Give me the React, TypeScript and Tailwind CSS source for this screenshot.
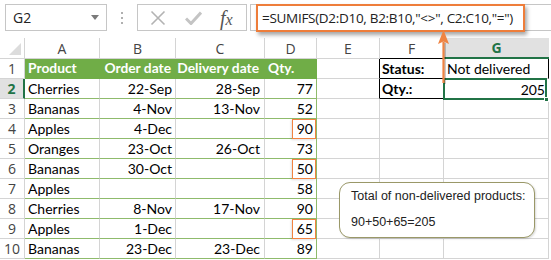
import React from 'react';

type Row = { n: number; a: string; b: string; c: string; d: string; mark?: boolean };

const rows: Row[] = [
  { n: 2, a: 'Cherries', b: '22-Sep', c: '28-Sep', d: '77' },
  { n: 3, a: 'Bananas', b: '4-Nov', c: '13-Nov', d: '52' },
  { n: 4, a: 'Apples', b: '4-Dec', c: '', d: '90', mark: true },
  { n: 5, a: 'Oranges', b: '23-Oct', c: '26-Oct', d: '73' },
  { n: 6, a: 'Bananas', b: '30-Oct', c: '', d: '50', mark: true },
  { n: 7, a: 'Apples', b: '', c: '', d: '58' },
  { n: 8, a: 'Cherries', b: '8-Nov', c: '17-Nov', d: '90' },
  { n: 9, a: 'Apples', b: '1-Dec', c: '', d: '65', mark: true },
  { n: 10, a: 'Bananas', b: '23-Dec', c: '23-Dec', d: '89' },
];

const cellFont = "font-['Lato','Liberation_Sans',sans-serif] text-[14px] text-black";
const boldFont = "font-['Lato','Liberation_Sans',sans-serif] text-[13.8px] font-bold text-white";
const headFont = "font-['Open_Sans','Liberation_Sans',sans-serif] text-[14px] text-[#444]";
const headFontG = "font-['Open_Sans','Liberation_Sans',sans-serif] text-[14px] font-bold text-[#217346]";

function RowHead({ n, active }: { n: number; active?: boolean }) {
  if (active) {
    return (
      <div className={`h-[20px] flex items-center justify-center bg-[#e1e1e1] border-b border-[#d4d4d4] border-r-2 border-r-[#217346] ${headFontG}`}>
        {n}
      </div>
    );
  }
  return (
    <div className={`h-[20px] flex items-center justify-center border-r border-b border-[#d4d4d4] ${headFont}`}>{n}</div>
  );
}

function FormulaBar() {
  return (
    <div className="h-[38px] relative bg-white flex items-start pt-[4px] pl-[5px]">
      {/* name box */}
      <div className="w-[102px] h-[27px] border border-[#c6c6c6] flex items-center justify-between pl-[7px] pr-[7px]">
        <span className="font-['Open_Sans','Liberation_Sans',sans-serif] text-[14px] text-[#222]">G2</span>
        <svg width="8" height="5" viewBox="0 0 8 5"><path d="M0 0h8L4 5z" fill="#7a7a7a" /></svg>
      </div>
      {/* dots */}
      <div className="w-[30px] h-[27px] flex flex-col items-center justify-center gap-[3px]">
        <span className="w-[2px] h-[2px] bg-[#b0b0b0]" />
        <span className="w-[2px] h-[2px] bg-[#b0b0b0]" />
        <span className="w-[2px] h-[2px] bg-[#b0b0b0]" />
      </div>
      {/* cancel / enter / fx */}
      <div className="w-[110px] h-[27px] border border-[#c6c6c6] flex items-center">
        <svg className="ml-[12px]" width="16" height="16" viewBox="0 0 16 16">
          <path d="M1.5 1.5l13 13M14.5 1.5l-13 13" stroke="#b3b3b3" strokeWidth="1.6" fill="none" />
        </svg>
        <svg className="ml-[19px]" width="17" height="14" viewBox="0 0 17 14">
          <path d="M1 7.5l5 5L16 1.5" stroke="#c4c4c4" strokeWidth="3" fill="none" />
        </svg>
        <span className="ml-[18px] font-['Liberation_Serif',serif] italic text-[20px] leading-none text-[#555]">
          f<span className="text-[16px]">x</span>
        </span>
      </div>
      {/* formula input */}
      <div className="ml-[3px] flex-1 h-[27px] border border-r-0 border-[#c6c6c6] pl-[6px] relative">
        <div className="absolute left-[5px] top-[-1px] w-[269px] h-[28px] border-2 border-[#ee7d3a] shadow-[2px_3px_4px_rgba(0,0,0,0.35)] bg-white flex items-center pl-[4px]">
          <span className="font-['Open_Sans','Liberation_Sans',sans-serif] text-[13.5px] text-[#222] whitespace-nowrap tracking-[-0.3px]">
            =SUMIFS(D2:D10, B2:B10,"&lt;&gt;", C2:C10,"=")
          </span>
        </div>
      </div>
    </div>
  );
}

export default function App() {
  const cell = 'h-[20px] flex items-center whitespace-nowrap overflow-visible';
  const dataB = 'border-r border-r-[#d4d4d4] border-b border-b-[#8fbb6c]';
  const grey = 'border-r border-b border-[#d4d4d4]';

  return (
    <div className="w-[551px] h-[260px] bg-white relative overflow-hidden">
      <FormulaBar />

      <div className="grid grid-cols-[25px_75px_76px_89px_52px_63px_64px_105px]">
        {/* column headers */}
        <div className="h-[21px] border-r border-b border-[#d4d4d4] relative">
          <svg className="absolute right-[3px] bottom-[3px]" width="12" height="12" viewBox="0 0 12 12">
            <path d="M12 0V12H0z" fill="#dcdcdc" />
          </svg>
        </div>
        {['A', 'B', 'C', 'D', 'E'].map((l) => (
          <div key={l} className={`h-[21px] flex items-center justify-center ${grey} ${headFont}`}>{l}</div>
        ))}
        <div className={`h-[21px] flex items-center justify-center border-r border-r-[#d4d4d4] border-b border-b-black ${headFont}`}>F</div>
        <div className={`h-[21px] flex items-center justify-center bg-[#e1e1e1] border-b-2 border-[#217346] ${headFontG}`}>G</div>

        {/* row 1 */}
        <RowHead n={1} />
        <div className={`${cell} bg-[#70ad47] border-b border-[#70ad47] pl-[3px] ${boldFont}`}>Product</div>
        <div className={`${cell} bg-[#70ad47] border-b border-[#70ad47] justify-end pr-[5px] ${boldFont}`}>Order date</div>
        <div className={`${cell} bg-[#70ad47] border-b border-[#70ad47] justify-end pr-[6px] ${boldFont}`}>Delivery date</div>
        <div className={`${cell} bg-[#70ad47] border-b border-r border-[#70ad47] pl-[3px] ${boldFont}`}>Qty.</div>
        <div className={`${cell} border-b border-[#d4d4d4] border-r border-r-black`} />
        <div className={`${cell} border-b border-b-black border-r border-r-black pl-[2px] font-bold ${cellFont}`}>Status:</div>
        <div className={`${cell} border-b border-b-[#d4d4d4] border-r border-r-black pl-[3px] ${cellFont}`}>Not delivered</div>

        {rows.map((r) => (
          <React.Fragment key={r.n}>
            <RowHead n={r.n} active={r.n === 2} />
            <div className={`${cell} ${dataB} pl-[3px] ${cellFont}`}>{r.a}</div>
            <div className={`${cell} ${dataB} justify-end pr-[3px] ${cellFont}`}>{r.b}</div>
            <div className={`${cell} ${dataB} justify-end pr-[4px] ${cellFont}`}>{r.c}</div>
            <div className={`${cell} border-r border-b border-[#8fbb6c] justify-end pr-[3px] relative ${cellFont}`}>
              {r.mark && (
                <span className="absolute right-0 top-0 w-[24px] h-[20px] border-[1.5px] border-[#f28340] bg-white shadow-[-1px_1px_2px_rgba(0,0,0,0.12)]" />
              )}
              <span className="relative">{r.d}</span>
            </div>
            {r.n === 2 ? (
              <>
                <div className={`${cell} border-b border-[#d4d4d4] border-r border-r-black`} />
                <div className={`${cell} border-b border-b-black border-r border-r-black pl-[2px] font-bold ${cellFont}`}>Qty.:</div>
                <div className={`${cell} relative justify-end pr-[4px] ${cellFont}`}>
                  <span className="absolute left-[-1px] top-[-1px] right-[2px] bottom-[-1px] border-2 border-[#217346]" />
                  <span className="absolute right-[0px] bottom-[-3px] w-[5px] h-[5px] bg-[#217346] border border-white" />
                  <span className="relative">205</span>
                </div>
              </>
            ) : (
              <>
                <div className={`${cell} ${grey}`} />
                <div className={`${cell} ${grey}`} />
                <div className={`${cell} ${grey}`} />
              </>
            )}
          </React.Fragment>
        ))}
      </div>

      {/* arrow from formula to G2 */}
      <svg className="absolute left-[436px] top-[29px]" width="16" height="56" viewBox="0 0 16 56">
        <path d="M9 14V55" stroke="rgba(0,0,0,0.2)" strokeWidth="2" />
        <path d="M7.5 13V54" stroke="#ef8443" strokeWidth="2.2" />
        <path d="M7.5 1L2 15L7.5 12.5L13 15Z" fill="#ef8443" />
      </svg>

      {/* callout */}
      <div className="absolute left-[339px] top-[182px] w-[196px] h-[56px] rounded-[11px] border-[1.5px] border-[#9a9868] bg-white shadow-[1px_1px_2px_rgba(0,0,0,0.15)] pl-[11px] pt-[5px] font-['Liberation_Sans',Arial,sans-serif] text-[12.5px] text-[#222]">
        <div className="leading-[16px]">Total of non-delivered products:</div>
        <div className="leading-[16px] mt-[10px]">90+50+65=205</div>
      </div>
    </div>
  );
}
